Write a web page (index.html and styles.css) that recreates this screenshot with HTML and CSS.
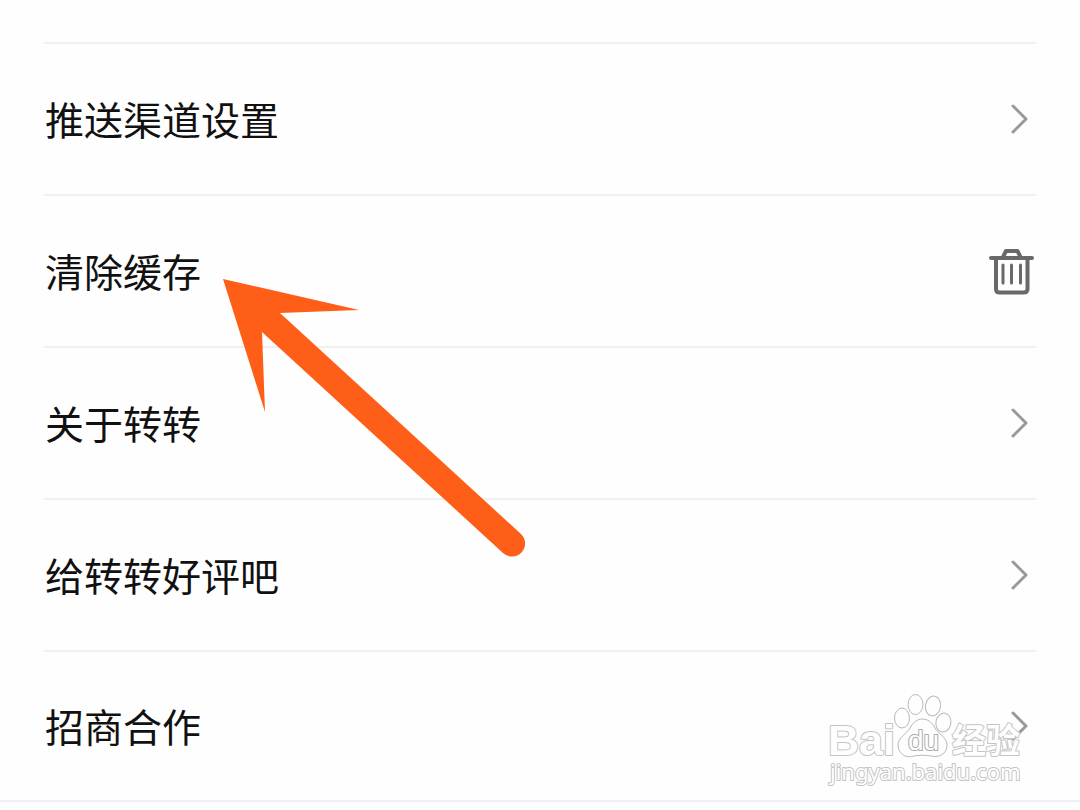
FILE: index.html
```html
<!DOCTYPE html>
<html lang="zh-CN">
<head>
    <meta charset="UTF-8">
    <meta name="viewport" content="width=device-width, initial-scale=1">
    <title>设置</title>
    <link rel="stylesheet" href="styles.css">
</head>
<body>
    <main class="settings">
        <nav class="settings-list">
            <a class="settings-item" href="#push">
                <span class="label">推送渠道设置</span>
                <svg class="chevron" viewBox="0 0 18 32"><path d="M2 3L15 16L2 29"/></svg>
            </a>
            <button class="settings-item" type="button">
                <span class="label">清除缓存</span>
                <svg class="trash" viewBox="0 0 46 48">
                    <path d="M2 11H43M13.500 11L17 4H28.500L32 11M7 12V42Q7 45.500 10.500 45.500H34.500Q38.500 45.500 38.500 42V12"/>
                    <path class="bars" d="M14 18V36M22.500 18V36M31.500 18V36"/>
                </svg>
            </button>
            <a class="settings-item" href="#about">
                <span class="label">关于转转</span>
                <svg class="chevron" viewBox="0 0 18 32"><path d="M2 3L15 16L2 29"/></svg>
            </a>
            <a class="settings-item" href="#rate">
                <span class="label">给转转好评吧</span>
                <svg class="chevron" viewBox="0 0 18 32"><path d="M2 3L15 16L2 29"/></svg>
            </a>
            <a class="settings-item" href="#business">
                <span class="label">招商合作</span>
                <svg class="chevron" viewBox="0 0 18 32"><path d="M2 3L15 16L2 29"/></svg>
            </a>
        </nav>

        <svg class="arrow" viewBox="0 0 310 290">
            <path d="M3 3L139 34L60 37L301 258A13 13 0 0 1 283 277L42 56L45 136Z"/>
        </svg>

        <svg class="watermark" viewBox="0 0 200 100">
            <text class="brand" x="0" y="61">Bai</text>
            <g class="paw">
                <ellipse cx="74" cy="24" rx="7.500" ry="10"/>
                <ellipse cx="87.500" cy="10.500" rx="7.500" ry="10"/>
                <ellipse cx="105" cy="12" rx="7.500" ry="10" transform="rotate(10 105 12)"/>
                <ellipse cx="115.500" cy="28.500" rx="7.500" ry="9.500" transform="rotate(10 115 28)"/>
                <path d="M82 34C88 22 101 22 107 34C110 40 119 43 119 51C119 60 111 64 103 62C97 61 91 61 86 62C77 65 70 59 70 51C70 43 78 41 82 34Z"/>
            </g>
            <text class="du" x="80" y="56">du</text>
            <text class="name" x="124" y="59">经验</text>
            <text class="url" x="2" y="86">jingyan.baidu.com</text>
        </svg>
    </main>
</body>
</html>
```
FILE: styles.css
```css
* {
    box-sizing: border-box;
}
body {
    margin: 0;
    background-color: #fefefe;
    color: #111;
    font-family: "Noto Sans CJK SC", sans-serif;
}
.settings {
    position: relative;
    padding-top: 42px;
    border-bottom: 2px solid #f0f0f0;
}
.settings-list {
    padding: 0 44px;
}
.settings-item {
    display: flex;
    align-items: center;
    justify-content: space-between;
    width: 100%;
    height: 152px;
    padding: 0 1px;
    border: 0;
    border-top: 2px solid #f0f0f0;
    background: none;
    color: inherit;
    font-family: inherit;
    font-size: 39px;
    line-height: 58px;
    text-decoration: none;
    cursor: pointer;
}
.settings-item:last-child {
    height: 150px;
}
.label {
    padding-bottom: 3px;
}
svg {
    display: block;
    fill: none;
}
.chevron {
    width: 18px;
    height: 32px;
    margin-right: 6px;
    stroke: #999;
    stroke-width: 3;
    stroke-linecap: round;
    stroke-linejoin: round;
}
.trash {
    width: 46px;
    height: 48px;
    stroke: #696969;
    stroke-width: 4;
    stroke-linecap: round;
    stroke-linejoin: round;
}
.bars {
    stroke-width: 3;
}

/* overlays */
.arrow,
.watermark {
    position: absolute;
    pointer-events: none;
}
.arrow {
    left: 220px;
    top: 276px;
    width: 310px;
    height: 290px;
    fill: #ff5e18;
}
.watermark {
    right: 52px;
    bottom: 6px;
    width: 200px;
    height: 100px;
    overflow: visible;
    fill: #fefefe;
    stroke: #c4c4c4;
    stroke-width: 2;
    stroke-linejoin: round;
}
.watermark text {
    paint-order: stroke;
}
.watermark .paw {
    stroke: #b8b8b8;
    stroke-width: 1;
}
.brand {
    font: bold 43px "Liberation Sans", sans-serif;
}
.du {
    stroke: #aaa;
    font: 28px "Liberation Sans", sans-serif;
}
.name {
    font: bold 34px "Noto Sans CJK SC", sans-serif;
}
.url {
    font: 22px "Noto Sans", sans-serif;
}
```
